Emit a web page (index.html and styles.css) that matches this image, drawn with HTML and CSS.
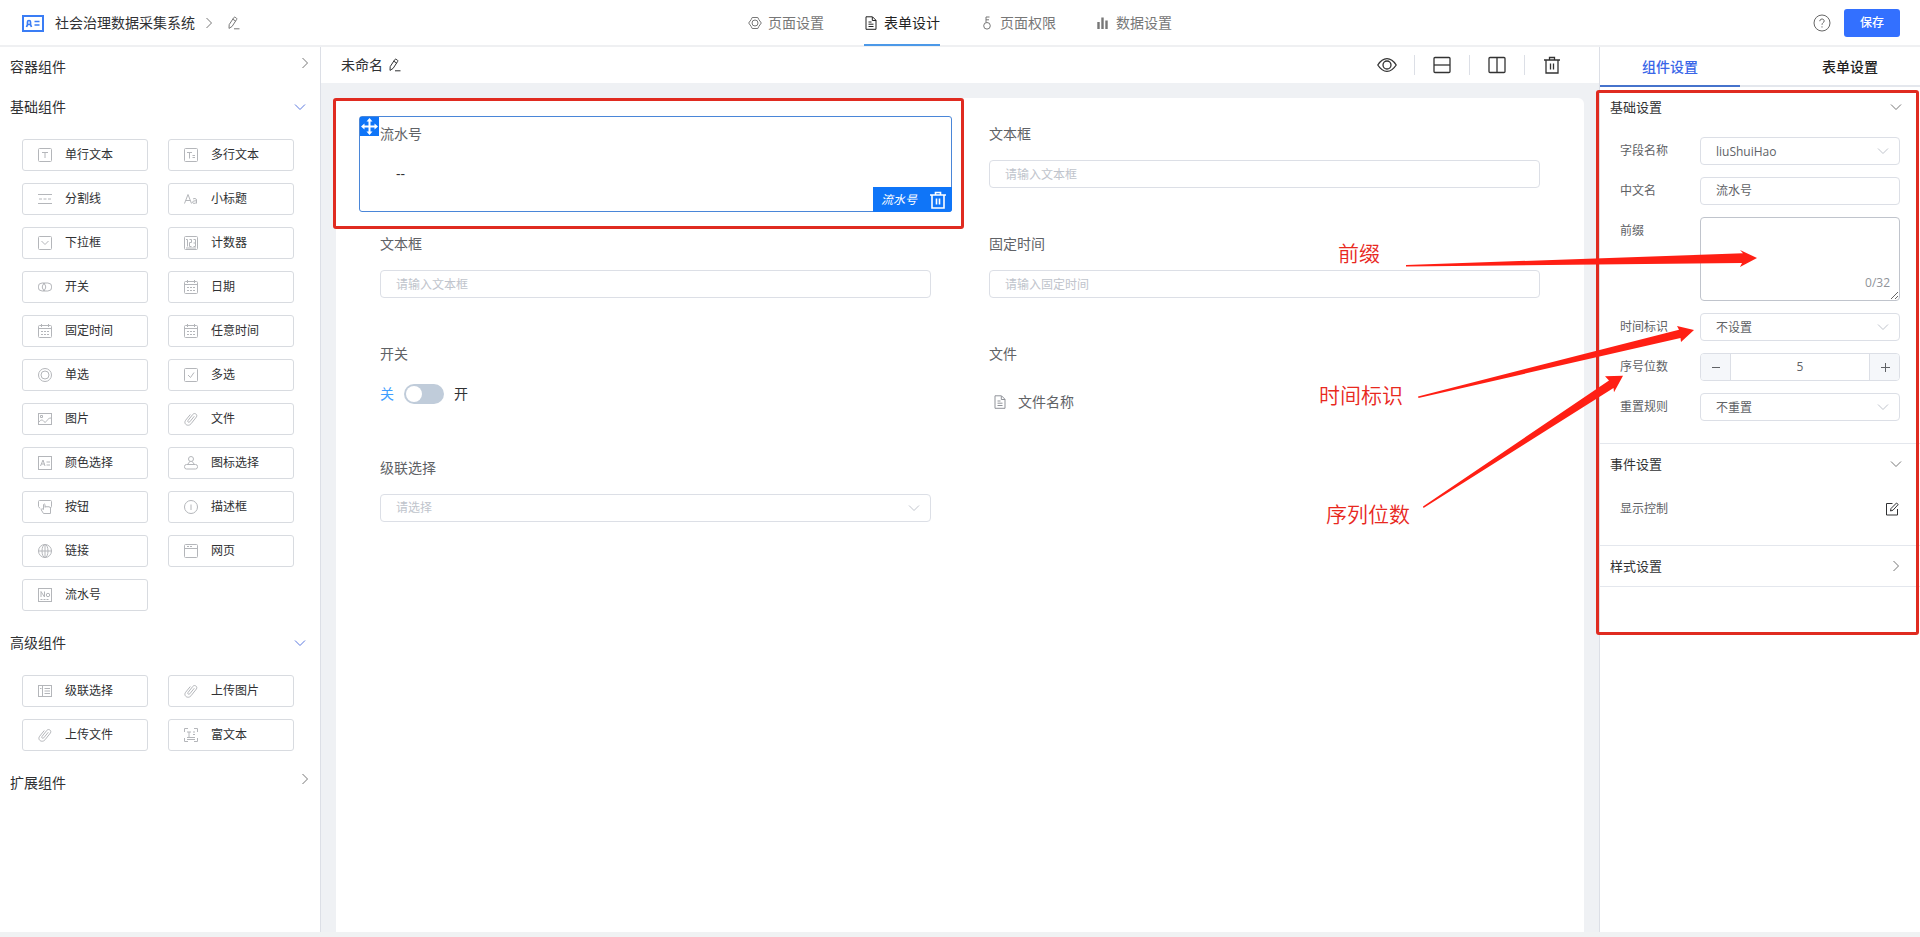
FILE: index.html
```html
<!DOCTYPE html>
<html lang="zh-CN">
<head>
<meta charset="utf-8">
<title>社会治理数据采集系统</title>
<link rel="stylesheet" href="styles.css">
</head>
<body>
<svg class="sprite" aria-hidden="true">
  <symbol id="right" viewBox="0 0 12 12"><path d="M3.5 1l5 5-5 5"/></symbol>
  <symbol id="down" viewBox="0 0 12 12"><path d="M1 3.5l5 5 5-5"/></symbol>
  <symbol id="pencil" viewBox="0 0 14 14"><path d="M3.2 8.6l4.600-7a1 1 0 0 1 1.300-.3l1.300.8a1 1 0 0 1 .3 1.300l-4.600 7-3.100 2zM6.800 3.200l2.900 1.900M8 12.800h5.500"/></symbol>
  <symbol id="text" viewBox="0 0 14 14"><rect x=".5" y=".5" width="13" height="13" rx="1"/><path d="M4 4.500h6M7 4.500V10"/></symbol>
  <symbol id="texts" viewBox="0 0 14 14"><rect x=".5" y=".5" width="13" height="13" rx="1"/><path d="M3 4.500h5M5.500 4.500v6M8.500 7.500H11M8.500 9.500H11"/></symbol>
  <symbol id="divide" viewBox="0 0 14 14"><path d="M0 2.500h14M0 11.500h14"/><path d="M1 7h12" stroke-dasharray="3 1.5"/></symbol>
  <symbol id="title" viewBox="0 0 14 14"><path d="M.5 11.500L4 2.500l3.500 9M1.800 8.500h4.500M9 7c1-.8 3.500-.8 3.500 1v3.500M12.500 8.800c-2 0-4 .2-4 1.500s2.800 1.600 4 0"/></symbol>
  <symbol id="drop" viewBox="0 0 14 14"><rect x=".5" y=".5" width="13" height="13" rx="1"/><path d="M3.500 5L7 8.500 10.500 5"/></symbol>
  <symbol id="count" viewBox="0 0 14 14"><rect x=".5" y=".5" width="13" height="13" rx="1"/><path d="M2 3.500h1.500V10.500M5.500 3.500h2v3h-2v4h2M9.500 3.500h2v7h-2M9.500 7h2M2 12h10"/></symbol>
  <symbol id="switch" viewBox="0 0 14 14"><path d="M4.200 3h5.600a4 4 0 0 1 0 8H4.200a4 4 0 0 1 0-8z"/><path d="M7 3.200a4 4 0 0 0 0 7.600M5 3.200a4 4 0 0 1 0 7.600"/></symbol>
  <symbol id="date" viewBox="0 0 14 14"><rect x=".5" y="1.500" width="13" height="12" rx="1"/><path d="M.5 4.500h13M3.500 0v3M10.500 0v3"/><path d="M3 7.500h8M3 10.500h8" stroke-dasharray="2 1"/></symbol>
  <symbol id="radio" viewBox="0 0 14 14"><circle cx="7" cy="7" r="6.500"/><circle cx="7" cy="7" r="4"/></symbol>
  <symbol id="check" viewBox="0 0 14 14"><rect x=".5" y=".5" width="13" height="13" rx="1"/><path d="M4 7l2.500 2.500L10 4.500"/></symbol>
  <symbol id="image" viewBox="0 0 14 14"><rect x=".5" y="1.500" width="13" height="11"/><path d="M2.500 3.500h2v2h-2zM1 10c2-3 4-2 5-.5s2 .5 3-1S11 6 13 6"/></symbol>
  <symbol id="clip" viewBox="0 0 14 14"><path d="M10.300 4.200L5.800 9.800c-1 1.200-2.700 0-1.800-1.300L8.800 2.400c1.800-2.200 5.200.2 3.600 2.600L7 11.800c-2.800 3.400-8 .2-5.400-3.500L6.300 2.500"/></symbol>
  <symbol id="color" viewBox="0 0 14 14"><rect x=".5" y=".5" width="13" height="13"/><path d="M2.500 10L5 4l2 6M3.500 8h3M8.500 6H12M8.500 9H12"/></symbol>
  <symbol id="stamp" viewBox="0 0 14 14"><circle cx="7" cy="3" r="2.500"/><path d="M6 5.300L3.500 8.500h7L8 5.300"/><rect x=".5" y="8.500" width="13" height="4.500" rx="2"/></symbol>
  <symbol id="press" viewBox="0 0 14 14"><path d="M2 8.500L.5 6.500v-5q0-1 1-1h11q1 0 1 1v5l-1 1.500M5.500 9.500V4.500q1-1 1.500 0v3M7 7q1-1 2 0 1-1 2 0 1.500-.5 1.500 1v5.500H5.500L3 9.500q1-1.500 2.500 0"/></symbol>
  <symbol id="info" viewBox="0 0 14 14"><circle cx="7" cy="7" r="6.500"/><path d="M7 4.500V10"/></symbol>
  <symbol id="globe" viewBox="0 0 14 14"><circle cx="7" cy="7" r="6.500"/><ellipse cx="7" cy="7" rx="3" ry="6.500"/><path d="M.5 7h13M7 .5v13"/></symbol>
  <symbol id="web" viewBox="0 0 14 14"><rect x=".5" y=".5" width="13" height="13" rx="1"/><path d="M.5 4.500h13M3 2.500h2M6 2.500h2"/></symbol>
  <symbol id="serial" viewBox="0 0 14 14"><rect x=".5" y=".5" width="13" height="13"/><path d="M3 9V3.500L6.500 9V3.500"/><circle cx="10" cy="7" r="1.700"/><path d="M2.500 11.500h9" stroke-dasharray="2 1"/></symbol>
  <symbol id="cascade" viewBox="0 0 14 14"><rect x=".5" y="1.500" width="13" height="11"/><path d="M4.500 1.500v11M2 4.500h1.500M6.500 4.500H12M6.500 7H12M6.500 9.500H12"/></symbol>
  <symbol id="rich" viewBox="0 0 14 14"><path d="M.5 4V.5H4M10 .5h3.500V4M13.500 10v3.500H10M4 13.500H.5V10M3 4h4M5 4v5M9 4h2M9 6.500h2M3 9.500h8M3 11.500h8"/></symbol>
  <symbol id="doc" viewBox="0 0 14 14"><path d="M2 .8h6.500L12 4.300v9H2zM8.300 1v3.500H12M4.500 6h3M4.500 8.200h5M4.500 10.500h5"/></symbol>
  <symbol id="gear" viewBox="0 0 14 14"><path d="M4.200 1.500h5.600l1 2 2.500 3.500-2.500 3.500-1 2H4.200l-1-2L.7 7l2.500-3.500z"/><circle cx="7" cy="7" r="3"/></symbol>
  <symbol id="key" viewBox="0 0 14 14"><circle cx="7" cy="9.800" r="3.300"/><path d="M6 6.500V1h3.500M6 3.800h3"/></symbol>
  <symbol id="bars" viewBox="0 0 14 14"><path d="M2.500 6v7M6.500 1.500V13M10.500 4.500V13" stroke-width="2.400"/></symbol>
  <symbol id="trash" viewBox="0 0 18 18"><path d="M1 4h16M3 4v13h12V4M6.500 4V1.500h5V4M7.500 7.500v6M10.500 7.500v6"/></symbol>
</svg>

<header class="topbar">
  <div class="brand">
    <svg class="logo" viewBox="0 0 22 17"><rect x="1" y="1" width="20" height="15"/><path d="M4.500 12l1-2.500V7q0-1.500 1.500-1.500T8.500 7v2.500l1 2.500M5.500 9.500h3M12.500 6.500h5M12.500 10h5"/></svg>
    <span>社会治理数据采集系统</span>
    <svg class="ico brand-arrow"><use href="#right"/></svg>
    <button class="bare" aria-label="编辑名称"><svg class="ico ico-14"><use href="#pencil"/></svg></button>
  </div>
  <nav class="nav">
    <a href="#page"><svg class="ico ico-14"><use href="#gear"/></svg>页面设置</a>
    <a href="#form" class="active"><svg class="ico ico-14"><use href="#doc"/></svg>表单设计</a>
    <a href="#auth"><svg class="ico ico-14"><use href="#key"/></svg>页面权限</a>
    <a href="#data"><svg class="ico ico-14"><use href="#bars"/></svg>数据设置</a>
  </nav>
  <div class="top-actions">
    <button class="bare" aria-label="帮助"><svg class="ico ico-18" viewBox="0 0 18 18"><circle cx="9" cy="9" r="8"/><path d="M6.800 7.200c0-3 4.400-2.800 4.400-.2 0 1.600-2.200 1.700-2.200 3.800M9 12.300v1.200"/></svg></button>
    <button class="save">保存</button>
  </div>
</header>

<main class="workspace">
  <aside class="palette">
    <button class="group-head closed">容器组件<svg class="ico"><use href="#right"/></svg></button>
    <button class="group-head">基础组件<svg class="ico"><use href="#down"/></svg></button>
    <div class="group">
      <button class="comp"><svg class="ico ico-14"><use href="#text"/></svg>单行文本</button>
      <button class="comp"><svg class="ico ico-14"><use href="#texts"/></svg>多行文本</button>
      <button class="comp"><svg class="ico ico-14"><use href="#divide"/></svg>分割线</button>
      <button class="comp"><svg class="ico ico-14"><use href="#title"/></svg>小标题</button>
      <button class="comp"><svg class="ico ico-14"><use href="#drop"/></svg>下拉框</button>
      <button class="comp"><svg class="ico ico-14"><use href="#count"/></svg>计数器</button>
      <button class="comp"><svg class="ico ico-14"><use href="#switch"/></svg>开关</button>
      <button class="comp"><svg class="ico ico-14"><use href="#date"/></svg>日期</button>
      <button class="comp"><svg class="ico ico-14"><use href="#date"/></svg>固定时间</button>
      <button class="comp"><svg class="ico ico-14"><use href="#date"/></svg>任意时间</button>
      <button class="comp"><svg class="ico ico-14"><use href="#radio"/></svg>单选</button>
      <button class="comp"><svg class="ico ico-14"><use href="#check"/></svg>多选</button>
      <button class="comp"><svg class="ico ico-14"><use href="#image"/></svg>图片</button>
      <button class="comp"><svg class="ico ico-14"><use href="#clip"/></svg>文件</button>
      <button class="comp"><svg class="ico ico-14"><use href="#color"/></svg>颜色选择</button>
      <button class="comp"><svg class="ico ico-14"><use href="#stamp"/></svg>图标选择</button>
      <button class="comp"><svg class="ico ico-14"><use href="#press"/></svg>按钮</button>
      <button class="comp"><svg class="ico ico-14"><use href="#info"/></svg>描述框</button>
      <button class="comp"><svg class="ico ico-14"><use href="#globe"/></svg>链接</button>
      <button class="comp"><svg class="ico ico-14"><use href="#web"/></svg>网页</button>
      <button class="comp"><svg class="ico ico-14"><use href="#serial"/></svg>流水号</button>
    </div>
    <button class="group-head">高级组件<svg class="ico"><use href="#down"/></svg></button>
    <div class="group">
      <button class="comp"><svg class="ico ico-14"><use href="#cascade"/></svg>级联选择</button>
      <button class="comp"><svg class="ico ico-14"><use href="#clip"/></svg>上传图片</button>
      <button class="comp"><svg class="ico ico-14"><use href="#clip"/></svg>上传文件</button>
      <button class="comp"><svg class="ico ico-14"><use href="#rich"/></svg>富文本</button>
    </div>
    <button class="group-head closed">扩展组件<svg class="ico"><use href="#right"/></svg></button>
  </aside>

  <section class="designer">
    <div class="toolbar">
      <div class="form-name">未命名<button class="bare" aria-label="重命名"><svg class="ico ico-14"><use href="#pencil"/></svg></button></div>
      <div class="tools">
        <button class="tool" aria-label="预览"><svg class="ico tool-ico wide" viewBox="0 0 20 18"><path d="M.8 9C3.500 4.800 6.500 2.700 10 2.700S16.500 4.800 19.200 9C16.500 13.200 13.500 15.300 10 15.300S3.500 13.200.8 9z"/><circle cx="10" cy="9" r="4"/></svg></button>
        <button class="tool" aria-label="上下布局"><svg class="ico tool-ico" viewBox="0 0 18 18"><rect x="1" y="1.500" width="16" height="15" rx="1"/><path d="M1 9h16"/></svg></button>
        <button class="tool" aria-label="左右布局"><svg class="ico tool-ico" viewBox="0 0 18 18"><rect x="1" y="1.500" width="16" height="15" rx="1"/><path d="M9 1.500v15"/></svg></button>
        <button class="tool" aria-label="清空"><svg class="ico tool-ico"><use href="#trash"/></svg></button>
      </div>
    </div>
    <div class="stage">
      <div class="canvas">
        <div class="mark mark-field"></div>
        <div class="field selected">
          <span class="handle"><svg viewBox="0 0 19 19"><path d="M9.500 3v13M3 9.500h13"/><path class="tips" d="M9.500 1l3 3.500h-6zM9.500 18l-3-3.500h6zM1 9.500l3.500-3v6zM18 9.500l-3.500 3v-6z"/></svg></span>
          <span class="label">流水号</span>
          <div class="plain">--</div>
          <div class="tag"><em>流水号</em><button class="bare" aria-label="删除"><svg class="ico ico-18"><use href="#trash"/></svg></button></div>
        </div>
        <div class="field">
          <label class="label" for="t1">文本框</label>
          <input class="box" id="t1" type="text" placeholder="请输入文本框">
        </div>
        <div class="field">
          <label class="label" for="t2">文本框</label>
          <input class="box" id="t2" type="text" placeholder="请输入文本框">
        </div>
        <div class="field">
          <label class="label" for="t3">固定时间</label>
          <input class="box" id="t3" type="text" placeholder="请输入固定时间">
        </div>
        <div class="field">
          <label class="label" for="sw">开关</label>
          <div class="switch-row"><span class="off">关</span><input class="switch" id="sw" type="checkbox"><span>开</span></div>
        </div>
        <div class="field">
          <span class="label">文件</span>
          <div class="file-row"><svg class="ico ico-14"><use href="#doc"/></svg>文件名称</div>
        </div>
        <div class="field">
          <label class="label" for="cas">级联选择</label>
          <div class="pick"><select class="box empty" id="cas"><option>请选择</option></select><svg class="ico"><use href="#down"/></svg></div>
        </div>
      </div>
    </div>
  </section>

  <aside class="props">
    <div class="tabs">
      <button class="tab active">组件设置</button>
      <button class="tab">表单设置</button>
    </div>
    <section class="panel">
      <button class="panel-head">基础设置<svg class="ico"><use href="#down"/></svg></button>
      <div class="rows">
        <div class="row"><label for="p1">字段名称</label><div class="pick"><select class="box" id="p1"><option>liuShuiHao</option></select><svg class="ico"><use href="#down"/></svg></div></div>
        <div class="row"><label for="p2">中文名</label><input class="box" id="p2" type="text" value="流水号"></div>
        <div class="row"><label for="p3">前缀</label><div class="area"><textarea class="box" id="p3"></textarea><span class="limit">0/32</span></div></div>
        <div class="row"><label for="p4">时间标识</label><div class="pick"><select class="box" id="p4"><option>不设置</option></select><svg class="ico"><use href="#down"/></svg></div></div>
        <div class="row"><label for="p5">序号位数</label><div class="stepper"><button aria-label="减少"><svg class="ico"><path d="M2 6.500h8"/></svg></button><input id="p5" type="text" value="5"><button aria-label="增加"><svg class="ico"><path d="M2 6.500h9M6.500 2v9"/></svg></button></div></div>
        <div class="row"><label for="p6">重置规则</label><div class="pick"><select class="box" id="p6"><option>不重置</option></select><svg class="ico"><use href="#down"/></svg></div></div>
      </div>
    </section>
    <section class="panel">
      <button class="panel-head">事件设置<svg class="ico"><use href="#down"/></svg></button>
      <div class="event"><span>显示控制</span><button class="bare" aria-label="编辑显示控制"><svg class="ico ico-14" viewBox="0 0 14 14"><path d="M7.500 1.500H1.500v11.500h11V7M5.500 9l.5-2.500L11.500 1l1.700 1.500L8 8.200z"/></svg></button></div>
    </section>
    <section class="panel">
      <button class="panel-head">样式设置<svg class="ico"><use href="#right"/></svg></button>
    </section>
    <div class="mark mark-props"></div>
    <div class="notes">
      <svg viewBox="0 0 320 280">
        <path d="M6 34L343 22.300 340 19 357 27 340 36 342 32 6 35.500z"/>
        <path d="M18 165.500L279 98.700 277 95 294 99 281 111 280.500 107 18.500 167z"/>
        <path d="M23 275.500L209 149.500 205 145.300 223 144.700 214 161.300 213.500 157 23.500 277z"/>
      </svg>
      <span class="note note-prefix">前缀</span>
      <span class="note note-time">时间标识</span>
      <span class="note note-digits">序列位数</span>
    </div>
  </aside>
</main>
</body>
</html>
```
FILE: styles.css
```css
* { box-sizing: border-box; }

body {
  margin: 0;
  min-height: 100vh;
  display: flex;
  flex-direction: column;
  padding-bottom: 5px;
  overflow-x: hidden;
  background: #f0f2f3;
  color: #303133;
  font-family: "Open Sans", "Noto Sans CJK SC", sans-serif;
  font-size: 14px;
  font-weight: 400;
  line-height: 20px;
}

button, input, select, textarea {
  margin: 0;
  font: inherit;
  color: inherit;
}

button { border: 0; padding: 0; background: none; cursor: pointer; }
a { color: inherit; text-decoration: none; }
.sprite { position: absolute; width: 0; height: 0; }
.bare { display: flex; }

.ico {
  width: 12px;
  height: 12px;
  flex: none;
  fill: none;
  stroke: currentColor;
  stroke-width: 1;
}
.ico-14 { width: 14px; height: 14px; }
.ico-18 { width: 18px; height: 18px; }

/* top bar */
.topbar {
  display: grid;
  grid-template-columns: 1fr auto 1fr;
  height: 47px;
  border-bottom: 2px solid #eff0f2;
  background: #fff;
}
.brand { display: flex; align-items: center; padding-left: 22px; }
.logo {
  width: 22px;
  height: 17px;
  margin-right: 11px;
  fill: none;
  stroke: #3a7df5;
  stroke-width: 2;
}
.logo path { stroke-width: 1.7; }
.brand-arrow { margin: 0 11px 0 8px; }
.brand .ico { color: #777; }
.nav { display: flex; gap: 40px; height: 46px; }
.nav a {
  display: flex;
  align-items: center;
  gap: 6px;
  border-top: 2px solid transparent;
  border-bottom: 2px solid transparent;
  color: #777;
}
.nav .active { color: #222; border-bottom-color: #4c99e8; }
.top-actions {
  display: flex;
  justify-content: flex-end;
  align-items: center;
  gap: 13px;
  padding-right: 20px;
  color: #666;
}
.save {
  width: 56px;
  height: 28px;
  border-radius: 3px;
  background: #3370ff;
  color: #fff;
  font-size: 12px;
  font-weight: 500;
}

.workspace { flex: 1; display: flex; }

/* component palette */
.palette {
  flex: none;
  width: 321px;
  border-right: 1px solid #dcdfe6;
  background: #fff;
}
.group-head {
  display: flex;
  justify-content: space-between;
  align-items: center;
  width: 100%;
  height: 40px;
  padding: 0 14px 0 10px;
}
.group-head .ico { color: #5b79e0; }
.closed { padding-right: 9px; }
.closed .ico { color: #777; margin-bottom: 8px; }
.group {
  display: grid;
  grid-template-columns: 126px 126px;
  gap: 12px 20px;
  padding: 12px 22px;
}
.comp {
  display: flex;
  align-items: center;
  gap: 13px;
  height: 32px;
  padding: 0 15px;
  border: 1px solid #d8dbe0;
  border-radius: 3px;
  font-size: 12px;
}
.comp .ico { color: #b4b6ba; }

/* designer */
.designer { flex: 1; display: flex; flex-direction: column; min-width: 0; }
.toolbar {
  display: flex;
  justify-content: space-between;
  align-items: center;
  height: 36px;
  padding: 0 20px;
  background: #fff;
}
.form-name { display: flex; align-items: center; gap: 4px; }
.tools { display: flex; align-items: center; }
.tool {
  display: flex;
  justify-content: center;
  width: 55px;
  height: 20px;
  align-items: center;
  border-left: 1px solid #dcdfe6;
  color: #333;
}
.tool:first-child { border-left: 0; }
.tool-ico { width: 18px; height: 18px; stroke-width: 1.3; }
.wide { width: 20px; }
.stage { flex: 1; display: flex; padding: 15px 15px 0; background: #eff1f4; }
.canvas {
  position: relative;
  flex: 1;
  display: grid;
  grid-template-columns: 1fr 1fr;
  align-content: start;
  gap: 14px 16px;
  padding: 18px 23px;
  border-radius: 6px 6px 0 0;
  background: #fff;
}
.field {
  position: relative;
  min-height: 96px;
  padding: 0 20px 12px;
  border: 1px solid transparent;
  border-radius: 3px;
}
.label {
  display: block;
  margin-bottom: 9px;
  line-height: 34px;
  color: #606266;
}
.selected { border-color: #4a86d8; }
.handle {
  position: absolute;
  top: 0;
  left: 0;
  width: 19px;
  height: 19px;
  background: #0f75f8;
}
.handle svg { display: block; fill: none; stroke: #fff; stroke-width: 2; }
.handle .tips { fill: #fff; stroke: none; }
.plain { padding-left: 16px; line-height: 28px; }
.tag {
  position: absolute;
  right: -1px;
  bottom: -1px;
  display: flex;
  align-items: center;
  gap: 12px;
  height: 25px;
  padding: 0 5px 0 8px;
  border-radius: 0 0 3px 0;
  background: #0f75f8;
  color: #fff;
  font-size: 12px;
}
.tag .ico { stroke-width: 1.6; }

.box {
  display: block;
  width: 100%;
  height: 28px;
  padding: 0 15px;
  border: 1px solid #dcdfe6;
  border-radius: 4px;
  background: #fff;
  color: #606266;
  font-size: 12px;
  appearance: none;
}
.box::placeholder, .empty { color: #c0c4cc; }
.pick { position: relative; }
.pick .ico { position: absolute; top: 8px; right: 11px; color: #c0c4cc; pointer-events: none; }
.switch-row { display: flex; align-items: center; gap: 10px; height: 28px; }
.off { color: #409eff; }
.switch {
  width: 40px;
  height: 20px;
  padding: 2px;
  border-radius: 10px;
  background: #c0ccda;
  appearance: none;
}
.switch::before {
  content: "";
  display: block;
  width: 16px;
  height: 16px;
  border-radius: 50%;
  background: #fff;
}
.file-row {
  display: flex;
  align-items: center;
  gap: 11px;
  height: 43px;
  padding-left: 4px;
  color: #606266;
}
.file-row .ico { color: #909399; }

/* property panel */
.props {
  position: relative;
  flex: none;
  width: 321px;
  border-left: 1px solid #dcdfe6;
  background: #fff;
}
.tabs {
  display: flex;
  justify-content: space-between;
  height: 40px;
  box-shadow: inset 0 -2px #e4e7ed;
}
.tab { width: 140px; font-weight: 500; color: #222; }
.tabs .active { color: #3a66e8; border-bottom: 2px solid #4673cc; border-top: 2px solid transparent; }
.panel { border-bottom: 1px solid #e4e7ed; }
.panel-head {
  display: flex;
  justify-content: space-between;
  align-items: center;
  width: 100%;
  height: 40px;
  padding: 0 18px 0 10px;
  font-size: 13px;
}
.panel-head .ico { color: #777; }
.rows {
  display: grid;
  gap: 12px;
  padding: 10px 20px 22px;
  font-size: 12px;
  color: #606266;
}
.row { display: grid; grid-template-columns: 80px 1fr; line-height: 28px; }
.area { position: relative; }
textarea.box { height: 84px; border-color: #c0c4cc; resize: vertical; }
.limit { position: absolute; right: 10px; bottom: 8px; line-height: 20px; color: #909399; }
.stepper {
  display: flex;
  height: 28px;
  border: 1px solid #dcdfe6;
  border-radius: 4px;
  overflow: hidden;
}
.stepper button { display: flex; width: 29px; align-items: center; justify-content: center; background: #f5f7fa; }
.stepper input {
  flex: 1;
  min-width: 0;
  border: solid #dcdfe6;
  border-width: 0 1px;
  text-align: center;
}
.event {
  display: flex;
  justify-content: space-between;
  padding: 15px 21px 26px 20px;
  font-size: 12px;
  line-height: 20px;
  color: #606266;
}
.event .bare { color: #303133; align-items: center; }

/* annotations */
.mark { position: absolute; border: 3px solid #e02b20; border-radius: 3px; pointer-events: none; }
.mark-field { top: 0; left: -3px; width: calc(50% + 7px); height: 131px; }
.mark-props { top: 43px; left: -4px; right: 1px; height: 545px; }
.notes { position: absolute; top: 184px; left: -200px; width: 320px; height: 280px; pointer-events: none; }
.notes svg { display: block; width: 100%; height: 100%; overflow: visible; fill: #ff1f14; }
.note { position: absolute; font-size: 21px; font-weight: 350; line-height: 28px; color: #e8281e; white-space: nowrap; }
.note-prefix { top: 8px; left: -62px; }
.note-time { top: 150px; left: -81px; }
.note-digits { top: 269px; left: -74px; }
```
